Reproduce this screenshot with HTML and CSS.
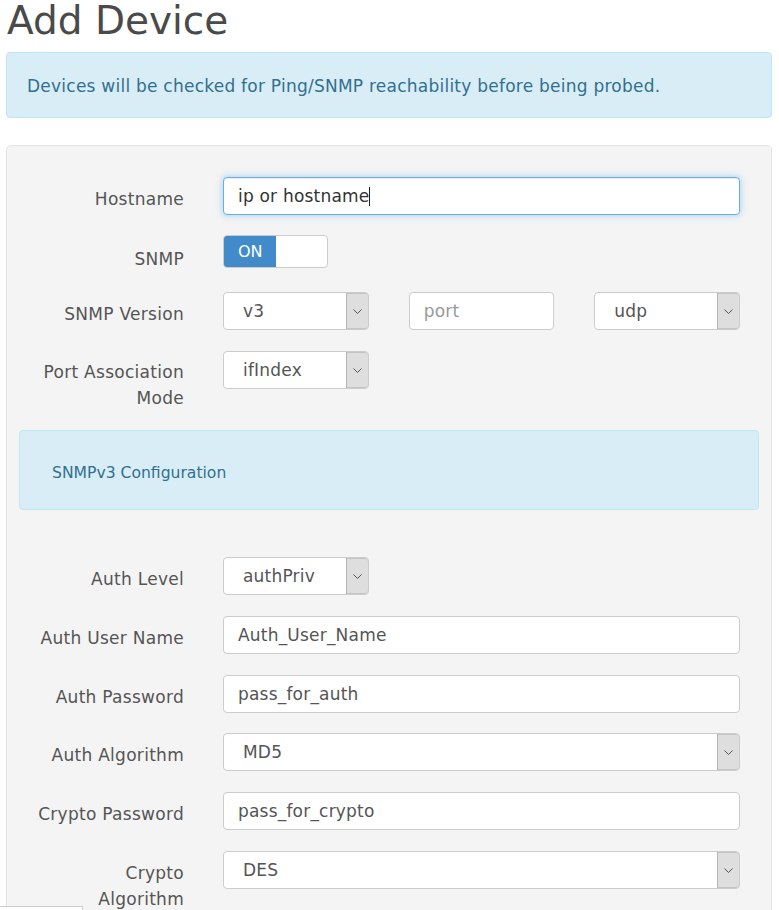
FILE: index.html
```html
<!DOCTYPE html>
<html lang="en">
<head>
<meta charset="utf-8">
<title>Add Device</title>
<link rel="stylesheet" href="styles.css">
</head>
<body>
<div class="page">
  <h1 class="title">Add Device</h1>
  <div class="alert">Devices will be checked for Ping/SNMP reachability before being probed.</div>

  <div class="well">
    <div class="form-group">
      <div class="label">Hostname</div>
      <div class="control">
        <div class="field focus"><span class="value dark">ip or hostname</span><span class="caret"></span></div>
      </div>
    </div>

    <div class="form-group snmp-row">
      <div class="label">SNMP</div>
      <div class="control">
        <div class="toggle"><span class="toggle-on">ON</span><span class="toggle-off"></span></div>
      </div>
    </div>

    <div class="form-group version-row">
      <div class="label">SNMP Version</div>
      <div class="control triple">
        <div class="select"><span class="select-text">v3</span><span class="select-btn"><svg width="9" height="5" viewBox="0 0 9 5"><polyline points="0.5,0.5 4.5,4.5 8.5,0.5" fill="none" stroke="#555" stroke-width="1"/></svg></span></div>
        <div class="field"><span class="placeholder">port</span></div>
        <div class="select"><span class="select-text">udp</span><span class="select-btn"><svg width="9" height="5" viewBox="0 0 9 5"><polyline points="0.5,0.5 4.5,4.5 8.5,0.5" fill="none" stroke="#555" stroke-width="1"/></svg></span></div>
      </div>
    </div>

    <div class="form-group assoc-row">
      <div class="label">Port Association<br>Mode</div>
      <div class="control">
        <div class="select small"><span class="select-text">ifIndex</span><span class="select-btn"><svg width="9" height="5" viewBox="0 0 9 5"><polyline points="0.5,0.5 4.5,4.5 8.5,0.5" fill="none" stroke="#555" stroke-width="1"/></svg></span></div>
      </div>
    </div>

    <div class="info-box">SNMPv3 Configuration</div>

    <div class="form-group v3">
      <div class="label">Auth Level</div>
      <div class="control">
        <div class="select small"><span class="select-text">authPriv</span><span class="select-btn"><svg width="9" height="5" viewBox="0 0 9 5"><polyline points="0.5,0.5 4.5,4.5 8.5,0.5" fill="none" stroke="#555" stroke-width="1"/></svg></span></div>
      </div>
    </div>

    <div class="form-group v3">
      <div class="label">Auth User Name</div>
      <div class="control"><div class="field"><span class="value">Auth_User_Name</span></div></div>
    </div>

    <div class="form-group">
      <div class="label">Auth Password</div>
      <div class="control"><div class="field"><span class="value">pass_for_auth</span></div></div>
    </div>

    <div class="form-group v3">
      <div class="label">Auth Algorithm</div>
      <div class="control">
        <div class="select"><span class="select-text">MD5</span><span class="select-btn"><svg width="9" height="5" viewBox="0 0 9 5"><polyline points="0.5,0.5 4.5,4.5 8.5,0.5" fill="none" stroke="#555" stroke-width="1"/></svg></span></div>
      </div>
    </div>

    <div class="form-group v3">
      <div class="label">Crypto Password</div>
      <div class="control"><div class="field"><span class="value">pass_for_crypto</span></div></div>
    </div>

    <div class="form-group v3">
      <div class="label">Crypto<br>Algorithm</div>
      <div class="control">
        <div class="select"><span class="select-text">DES</span><span class="select-btn"><svg width="9" height="5" viewBox="0 0 9 5"><polyline points="0.5,0.5 4.5,4.5 8.5,0.5" fill="none" stroke="#555" stroke-width="1"/></svg></span></div>
      </div>
    </div>
  </div>
</div>
<div class="status-tab"></div>
</body>
</html>
```
FILE: styles.css
```css
html, body {
  margin: 0;
  padding: 0;
  background: #fff;
  overflow: hidden;
}
body {
  font-family: "DejaVu Sans", Verdana, sans-serif;
  color: #555;
}
.page {
  padding: 0 7px 0 6px;
}
.title {
  margin: 0 0 11px 1px;
  font-size: 39px;
  line-height: 41px;
  font-weight: normal;
  color: #4a4a4a;
}
.alert {
  background: #d9edf7;
  border: 1px solid #bce8f1;
  border-radius: 4px;
  color: #31708f;
  font-size: 17px;
  letter-spacing: 0.24px;
  line-height: 26px;
  padding: 20px 20px 18px;
}
.well {
  margin-top: 27px;
  background: #f4f4f4;
  border: 1px solid #e3e3e3;
  border-radius: 5px;
  padding: 31px 31px 40px 0;
  height: 900px;
}
.form-group {
  display: grid;
  grid-template-columns: 177px 1fr;
  column-gap: 39px;
  align-items: start;
  margin-bottom: 20px;
}
.form-group.version-row {
  margin-bottom: 21px;
}
.form-group.assoc-row {
  margin-bottom: 19px;
}
.form-group.v3 {
  margin-bottom: 21px;
}
.label {
  text-align: right;
  font-size: 17px;
  letter-spacing: 0.28px;
  line-height: 26px;
  padding-top: 9px;
  color: #555;
}
.assoc-row .label {
  padding-top: 8px;
}
.snmp-row .label {
  padding-top: 11px;
}
.snmp-row {
  min-height: 36px;
}
.field {
  box-sizing: border-box;
  height: 38px;
  background: #fff;
  border: 1px solid #ccc;
  border-radius: 4px;
  padding: 0 14px;
  display: flex;
  align-items: center;
  font-size: 17px;
  letter-spacing: 0.2px;
  color: #555;
}
.field.focus {
  border-color: #66afe9;
  box-shadow: inset 0 1px 1px rgba(0,0,0,.075), 0 0 7px rgba(102,175,233,.6);
}
.value.dark {
  color: #333;
}
.caret {
  display: inline-block;
  width: 1px;
  height: 19px;
  background: #222;
}
.placeholder {
  color: #999;
}
.triple {
  display: grid;
  grid-template-columns: 1fr 1fr 1fr;
  column-gap: 40px;
}
.select {
  box-sizing: border-box;
  height: 38px;
  background: #fff;
  border: 1px solid #ccc;
  border-radius: 4px;
  display: flex;
  align-items: stretch;
  font-size: 17px;
  letter-spacing: 0.2px;
  color: #555;
  overflow: hidden;
}
.select.small {
  width: 146px;
}
.select-text {
  flex: 1;
  display: flex;
  align-items: center;
  padding-left: 19px;
}
.select-btn {
  width: 21px;
  background: #dedede;
  border-left: 1px solid #b5b5b5;
  box-shadow: inset 0 1px 0 #c4c4c4, inset 0 -1px 0 #c4c4c4;
  display: flex;
  align-items: center;
  justify-content: center;
  border-radius: 0 3px 3px 0;
}
.toggle {
  box-sizing: border-box;
  width: 105px;
  height: 33px;
  border: 1px solid #ccc;
  border-radius: 4px;
  display: flex;
  overflow: hidden;
  background: #fff;
}
.toggle-on {
  width: 52px;
  background: #428bca;
  color: #fff;
  font-size: 16px;
  display: flex;
  align-items: center;
  padding-left: 14px;
  box-sizing: border-box;
}
.toggle-off {
  flex: 1;
}
.info-box {
  margin: 0 -19px 47px 12px;
  background: #d9edf7;
  border: 1px solid #bce8f1;
  border-radius: 4px;
  color: #31708f;
  font-size: 15.6px;
  line-height: 26px;
  padding: 29px 32px 23px;
}
.status-tab {
  position: fixed;
  left: 0;
  bottom: 0;
  width: 82px;
  height: 3px;
  background: #fff;
  border-top: 1px solid #ccc;
  border-right: 1px solid #ccc;
}
```
